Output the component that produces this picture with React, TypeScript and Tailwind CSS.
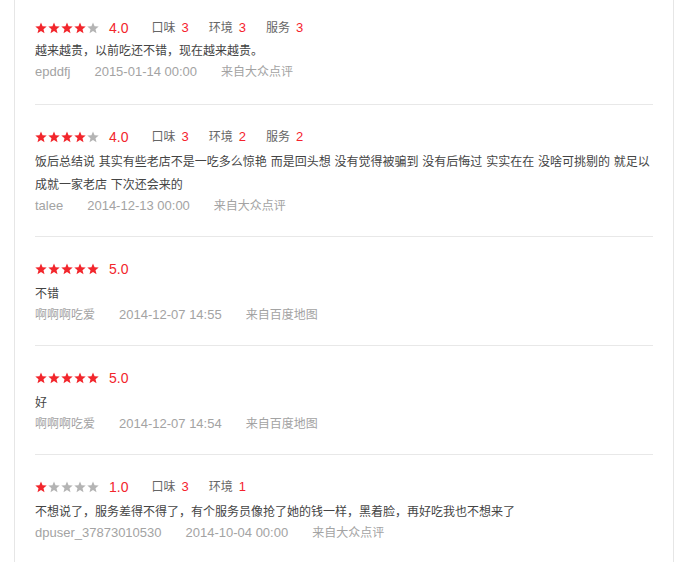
import React from 'react';

interface Review {
  score: number;
  sub?: { label: string; value: number }[];
  text: string;
  user: string;
  time: string;
  source: string;
}

const reviews: Review[] = [
  {
    score: 4,
    sub: [
      { label: '口味', value: 3 },
      { label: '环境', value: 3 },
      { label: '服务', value: 3 },
    ],
    text: '越来越贵，以前吃还不错，现在越来越贵。',
    user: 'epddfj',
    time: '2015-01-14 00:00',
    source: '来自大众点评',
  },
  {
    score: 4,
    sub: [
      { label: '口味', value: 3 },
      { label: '环境', value: 2 },
      { label: '服务', value: 2 },
    ],
    text: '饭后总结说 其实有些老店不是一吃多么惊艳 而是回头想 没有觉得被骗到 没有后悔过 实实在在 没啥可挑剔的 就足以成就一家老店 下次还会来的',
    user: 'talee',
    time: '2014-12-13 00:00',
    source: '来自大众点评',
  },
  {
    score: 5,
    text: '不错',
    user: '啊啊啊吃爱',
    time: '2014-12-07 14:55',
    source: '来自百度地图',
  },
  {
    score: 5,
    text: '好',
    user: '啊啊啊吃爱',
    time: '2014-12-07 14:54',
    source: '来自百度地图',
  },
  {
    score: 1,
    sub: [
      { label: '口味', value: 3 },
      { label: '环境', value: 1 },
    ],
    text: '不想说了，服务差得不得了，有个服务员像抢了她的钱一样，黑着脸，再好吃我也不想来了',
    user: 'dpuser_37873010530',
    time: '2014-10-04 00:00',
    source: '来自大众点评',
  },
];

const Star = ({ on }: { on: boolean }) => (
  <svg width="12" height="12" viewBox="0 0 24 24" className="shrink-0">
    <polygon
      points="12,1 15.1,8.6 23.4,9.2 17,14.5 19,22.6 12,18.2 5,22.6 7,14.5 0.6,9.2 8.9,8.6"
      fill={on ? '#f2262c' : '#b4b4b4'}
    />
  </svg>
);

const App: React.FC = () => {
  return (
    <div className="min-h-[562px] bg-white font-['Liberation_Sans','Noto_Sans_CJK_SC',sans-serif]">
      <div className="ml-[14px] w-[660px] min-h-[562px] border-x border-[#e6e6e6] px-5">
        {reviews.map((r, i) => {
          const cjkUser = /[\u4e00-\u9fa5]/.test(r.user);
          const first = i === 0;
          return (
            <div
              key={i}
              className={`${first ? 'pt-4 pb-[23px]' : 'pt-5 pb-[21px]'} ${
                i < reviews.length - 1 ? 'border-b border-[#e8e8e8]' : ''
              }`}
            >
              {/* 评分行 */}
              <div className="flex items-center h-6">
                <div className="flex gap-[1px]">
                  {[1, 2, 3, 4, 5].map((n) => (
                    <Star key={n} on={n <= r.score} />
                  ))}
                </div>
                <span className="ml-[10px] text-[14px] text-[#f2262c] leading-6">{r.score}.0</span>
                {r.sub && (
                  <div className="flex ml-[23px] gap-5 text-[12px] text-[#666]">
                    {r.sub.map((s) => (
                      <span key={s.label}>
                        {s.label}
                        <span className="ml-[6px] text-[13px] text-[#f5222d]">{s.value}</span>
                      </span>
                    ))}
                  </div>
                )}
              </div>

              {/* 评论内容 */}
              <p
                className={`${first ? 'mt-0' : 'mt-[2px]'} text-[12px] leading-[23px] text-[#444] [word-spacing:0.5px]`}
              >
                {r.text}
              </p>

              {/* 用户信息 */}
              <div className="flex gap-6 h-[18px] items-center text-[#a3a3a3]">
                <span className={cjkUser ? 'text-[12px]' : 'text-[13px]'}>{r.user}</span>
                <span className="text-[13px]">{r.time}</span>
                <span className="text-[12px]">{r.source}</span>
              </div>
            </div>
          );
        })}
      </div>
    </div>
  );
};

export default App;
